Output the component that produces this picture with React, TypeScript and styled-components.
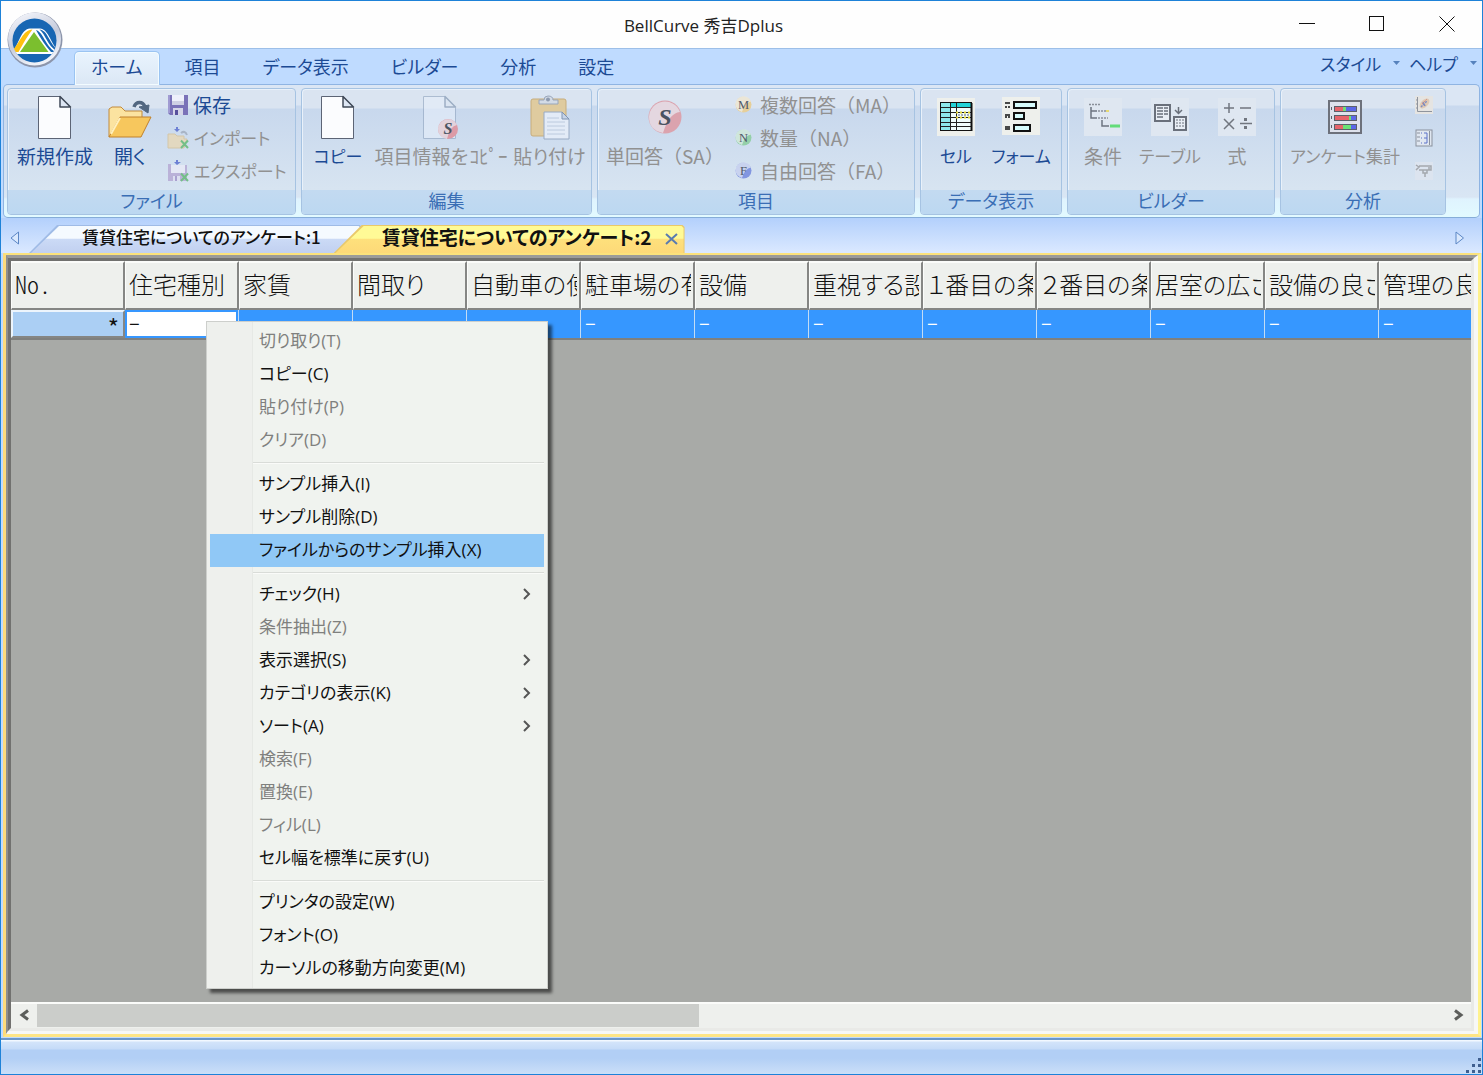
import React from "react";
import styled, { createGlobalStyle, css } from "styled-components";

const UI = `"Open Sans", "Noto Sans CJK JP", sans-serif`;
const JP = `"Noto Sans CJK JP", sans-serif`;

const Global = createGlobalStyle`
  *, *::before, *::after { box-sizing: border-box; }
  html, body, #root { height: 100%; }
  body { margin: 0; background: #bfdbff; overflow: hidden; }
  button, input { font: inherit; color: inherit; background: none; border: 0; padding: 0; margin: 0; }
`;

const Window = styled.div`
  position: relative;
  display: flex;
  flex-direction: column;
  height: 100%;
  min-height: 600px;
  border: 1px solid #1e82d8;
  background: #bfdbff;
  font-family: ${JP};
  font-feature-settings: "palt";
  color: #1c4a94;
  overflow: hidden;
`;

/* ---------- title bar ---------- */
const TitleBar = styled.header`
  display: flex;
  flex: none;
  height: 47px;
  background: #fefefe;
`;
const Title = styled.h1`
  flex: 1;
  margin: 0;
  padding-left: 134px;
  text-align: center;
  font: 400 17px/50px ${UI};
  color: #222;
`;
const CaptionButton = styled.button`
  display: grid;
  place-items: center;
  width: 70px;
  height: 46px;
`;
const Orb = styled.button`
  position: absolute;
  left: 5px;
  top: 10px;
  width: 58px;
  height: 58px;
`;

/* ---------- ribbon ---------- */
const TabStrip = styled.nav`
  display: flex;
  flex: none;
  align-items: flex-end;
  gap: 8px;
  height: 36px;
  padding: 0 4px 0 73px;
  border-top: 1px solid #9dbfe8;
`;
const RibbonTab = styled.button<{ $active?: boolean }>`
  height: 33px;
  padding: 0 16px 5px;
  font-size: 18px;
  line-height: 24px;
  border: 1px solid transparent;
  border-bottom: 0;
  border-radius: 5px 5px 0 0;
  ${(p) =>
    p.$active &&
    css`
      position: relative;
      height: 34px;
      margin-bottom: -1px;
      border-color: #9bc4f2;
      background: linear-gradient(#e9f4fe, #dbe7f5);
      box-shadow: inset 0 0 0 1px #f2fbff;
    `}
`;
const Spacer = styled.div`
  flex: 1;
`;
const MenuLink = styled.button`
  display: flex;
  align-items: center;
  gap: 12px;
  height: 34px;
  padding-right: 1px;
  margin-bottom: 4px;
  font-size: 17px;
`;
const Ribbon = styled.div`
  display: flex;
  flex: none;
  gap: 5px;
  margin: 0 2px;
  padding: 3px 3px 2px;
  border: 1px solid #8fb4e2;
  border-bottom-color: #86add8;
  border-radius: 5px;
  background: linear-gradient(#dbe6f4 0 20px, #c9d9ee 21px, #d9e6f4 112px, #dff3fe 114px, #e2faff);
`;
const Group = styled.section<{ $width: number }>`
  flex: 0 0 ${(p) => p.$width}px;
  border: 1px solid #a6c3e2;
  border-radius: 4px;
  box-shadow: inset 1px 1px 0 #e9f1fa;
  overflow: hidden;
  background: linear-gradient(#dae4f1 0 19px, #c8d8ed 20px, #d7e4f1 100px);
`;
const GroupBody = styled.div`
  display: flex;
  height: 101px;
  padding: 0 2px;
`;
const GroupLabel = styled.h2`
  margin: 0;
  height: 24px;
  font-size: 18px;
  line-height: 20px;
  font-weight: 400;
  text-align: center;
  color: #3a6eb5;
  background: linear-gradient(#c3daf1, #bcd8f1);
`;
const LargeButton = styled.button<{ $width: number; $kana?: boolean }>`
  display: flex;
  flex: 0 0 ${(p) => p.$width}px;
  flex-direction: column;
  align-items: center;
  padding-top: 6px;
  font-size: ${(p) => (p.$kana ? 17 : 19)}px;
  line-height: 24px;
  white-space: nowrap;
  &:disabled {
    color: #919191;
  }
  svg {
    margin-bottom: 4px;
  }
`;
const SmallStack = styled.div<{ $pad: number }>`
  display: flex;
  flex-direction: column;
  padding-left: ${(p) => p.$pad}px;
`;
const SmallButton = styled.button<{ $gap?: number; $kana?: boolean }>`
  display: flex;
  align-items: center;
  gap: ${(p) => p.$gap ?? 4}px;
  height: 33px;
  padding-bottom: 2px;
  font-size: ${(p) => (p.$kana ? 17 : 19)}px;
  line-height: 24px;
  white-space: nowrap;
  &:disabled {
    color: #919191;
  }
`;
const FullWidth = styled.span`
  font-feature-settings: normal;
`;

/* ---------- document tabs ---------- */
const DocStrip = styled.div`
  display: flex;
  flex: none;
  align-items: flex-end;
  height: 35px;
  background: linear-gradient(#b3d0fc, #dbe9ff);
`;
const ScrollArrow = styled.button`
  display: grid;
  place-items: center;
  width: 28px;
  height: 30px;
`;
const DocTab = styled.div<{ $active?: boolean }>`
  position: relative;
  z-index: 0;
  display: flex;
  align-items: center;
  gap: 13px;
  height: 28px;
  margin-left: ${(p) => (p.$active ? -28 : 0)}px;
  padding: ${(p) => (p.$active ? "0 6px 4px 48px" : "0 41px 4px 53px")};
  font-size: ${(p) => (p.$active ? 19 : 17)}px;
  line-height: 24px;
  font-weight: ${(p) => (p.$active ? 700 : 500)};
  color: #111;
  svg {
    margin-top: 6px;
  }
  &::before,
  &::after {
    content: "";
    position: absolute;
    z-index: -2;
    inset: 0;
    background: ${(p) => (p.$active ? "#e9c96b" : "#9fbbe6")};
    clip-path: polygon(28px 0, calc(100% - 2px) 0, 100% 2px, 100% 100%, 0 100%);
  }
  &::after {
    z-index: -1;
    inset: 1px 1px 0 2px;
    background: ${(p) =>
      p.$active
        ? "linear-gradient(#fffa96 0 45%, #fee07c 50%, #fdd978)"
        : "linear-gradient(#f5faff 0 45%, #cbdaf6 50%, #c1d0f0)"};
  }
`;

/* ---------- grid ---------- */
const Client = styled.main`
  display: flex;
  flex: 1;
  min-height: 0;
  margin: 0 1px 0 2px;
  border: solid;
  border-width: 2px 3px 3px;
  border-color: #fbe27b #fff28e #fee585 #fddb7b;
`;
const BevelOuter = styled.div`
  display: flex;
  flex: 1;
  min-width: 0;
  border: solid;
  border-width: 3px 4px 3px 2px;
  border-color: #9b9b99 #f7f8f6 #f7f8f6 #8f8f8d;
`;
const BevelInner = styled.div`
  display: flex;
  flex-direction: column;
  flex: 1;
  min-width: 0;
  border: solid;
  border-width: 3px 3px 3px;
  border-color: #71716f #e9eae7 #e9eae7 #71716f;
  background: #a8aaa7;
`;
const GridArea = styled.div`
  flex: 1;
  min-height: 0;
  overflow: hidden;
`;
const Table = styled.table`
  width: 1482px;
  table-layout: fixed;
  border-collapse: separate;
  border-spacing: 0;
  border-bottom: 2px solid #7f807e;
  color: #111;
`;
const Col = styled.col`
  width: 114px;
`;
const Head = styled.th`
  height: 49px;
  padding: 0 2px 4px 3px;
  background: #eef0ed;
  border: solid;
  border-width: 2px 2px 2px 1px;
  border-color: #fbfcfa #858684 #858684 #fbfcfa;
`;
const HeadText = styled.div`
  overflow: hidden;
  font-size: 24px;
  line-height: 40px;
  font-weight: 300;
  text-align: left;
  white-space: nowrap;
`;
const Narrow = styled.span`
  font-family: "Liberation Sans Narrow", "Noto Sans CJK JP", sans-serif;
  font-feature-settings: "hwid";
`;
const RowHead = styled.th`
  height: 28px;
  padding: 6px 4px 0 0;
  font-size: 24px;
  line-height: 18px;
  font-weight: 400;
  text-align: right;
  background: #abcff4;
  border: 2px solid #edf5fc;
  border-right-color: #858684;
  border-bottom-color: #858684;
`;
const Cell = styled.td`
  height: 28px;
  padding: 0 0 4px 4px;
  font-size: 20px;
  line-height: 24px;
  color: #fff;
  background: #3697ff;
  border-right: 1px solid #c3dcf4;
`;
const EditCell = styled(Cell)`
  padding: 2px;
`;
const CellInput = styled.input`
  display: block;
  width: 100%;
  height: 24px;
  padding: 0 0 4px 2px;
  font-size: 20px;
  color: #111;
  background: #fff;
  outline: 0;
`;
const ScrollBar = styled.div`
  display: flex;
  flex: none;
  height: 26px;
  border-top: 2px solid #fbfcfa;
  background: #eef0ed;
`;
const ScrollButton = styled.button`
  display: grid;
  place-items: center;
  flex: 0 0 26px;
  padding-bottom: 2px;
`;
const Track = styled.div`
  flex: 1;
`;
const Thumb = styled.div`
  width: 47%;
  height: 23px;
  background: #cbcdca;
`;
const StatusBar = styled.footer`
  display: flex;
  flex: none;
  justify-content: flex-end;
  align-items: flex-end;
  height: 36px;
  margin-top: 1px;
  border-top: 2px solid #6c97c8;
  background: linear-gradient(#f2f8ff 0 1px, #d3e4fa 2px, #c5dbf8 9px, #b2cff5 10px 18px, #cbdff8);
`;

/* ---------- context menu ---------- */
const Menu = styled.div`
  position: absolute;
  left: 205px;
  top: 320px;
  width: 342px;
  padding: 3px;
  border: 1px solid #cdcfcc;
  background: linear-gradient(90deg, #eef0ed 45px, #e6e9e5 45px 46px, #f0f3ef 46px);
  box-shadow: 4px 4px 3px rgba(0, 0, 0, 0.55);
`;
const MenuItem = styled.button<{ $hot?: boolean }>`
  display: flex;
  align-items: center;
  justify-content: space-between;
  width: 100%;
  height: 33px;
  padding: 0 12px 1px 49px;
  font: 400 17px/24px ${UI};
  font-feature-settings: "palt";
  text-align: left;
  white-space: nowrap;
  color: #111;
  background: ${(p) => (p.$hot ? "#90c8f6" : "transparent")};
  &:disabled {
    color: #7f807e;
  }
`;
const Divider = styled.hr`
  height: 11px;
  margin: 0 0 0 43px;
  border: 0;
  background: linear-gradient(transparent 5px, #d9dcd8 5px 6px, #fafbf9 6px 7px, transparent 7px);
`;

/* ---------- drawings ---------- */
const LogoIcon = () => (
  <svg width="58" height="58" viewBox="0 0 58 58" aria-hidden="true">
    <defs>
      <linearGradient id="ring" x1="0" y1="0" x2="0.4" y2="1">
        <stop offset="0" stopColor="#fafbff" />
        <stop offset="0.6" stopColor="#c5cbdc" />
        <stop offset="1" stopColor="#eef1f8" />
      </linearGradient>
      <clipPath id="disc"><circle cx="28.500" cy="29.500" r="22" /></clipPath>
    </defs>
    <circle cx="29" cy="29" r="27.500" fill="#8c95ab" />
    <circle cx="28.500" cy="28" r="26.500" fill="url(#ring)" />
    <circle cx="28.500" cy="29.500" r="22" fill="#1766b3" />
    <g clipPath="url(#disc)">
      <path d="M4 43C13 36 14 18 24 17.500L34 17.500C43 18 45 34 54 42V43Z" fill="#fff" />
      <path d="M5 41C14 33 16 19 26.500 18.500C22 24 17 33 12.500 41Z" fill="#fdc010" />
      <path d="M28 21L42.500 41H14Z" fill="#7bbf2e" />
      <path d="M30 19C37 21 39 34 49 41H45Q37 32 30 19Z" fill="#1766b3" />
      <path d="M33.500 18.500C42 19 43 33 53 40H50.500C41 34 40 24 33.500 18.500Z" fill="#1766b3" />
    </g>
  </svg>
);

const Page = ({ faded = false }: { faded?: boolean }) => (
  <g transform="translate(0 1)" opacity={faded ? 0.6 : 1}>
    <path d="M.5 .5H22L32.500 11.500V42.500H.5Z" fill={faded ? "#e6eefa" : "#fbfcfe"} stroke={faded ? "#8ea2bd" : "#5c6475"} />
    <path d="M22 .5V11H32.500Z" fill="#dde6f3" stroke={faded ? "#758ba8" : "#3f4857"} strokeWidth="1.500" strokeLinejoin="round" />
  </g>
);
const NewIcon = () => (
  <svg width="34" height="45" aria-hidden="true"><Page /></svg>
);
const OpenIcon = () => (
  <svg width="46" height="45" viewBox="0 0 46 45" aria-hidden="true">
    <path d="M2 42V14L5 12H14L18 16H35V22" fill="#fbe3a0" stroke="#c28a3b" />
    <path d="M2 42L13 22H44L34 42Z" fill="#f7c75d" stroke="#c0812c" strokeLinejoin="round" />
    <path d="M4 39L13 23" stroke="#fff0bd" strokeWidth="2" />
    <path d="M27 12C29 6 36 6 38 12" fill="none" stroke="#526781" strokeWidth="3.500" />
    <path d="M32 12L42 10L41 18Z" fill="#526781" stroke="#526781" strokeLinejoin="round" />
  </svg>
);
const SaveIcon = () => (
  <svg width="22" height="22" viewBox="0 0 22 22" aria-hidden="true">
    <path d="M1 1H21V21H3L1 19Z" fill="#7a72b8" />
    <path d="M5 1H17V11H5Z" fill="#eef0fb" />
    <path d="M5 7H17V11H5Z" fill="#cfd0e4" />
    <path d="M6 14H16V21H6Z" fill="#d5d5e8" />
    <path d="M8 16H11V21H8Z" fill="#57509c" />
    <path d="M1 1H3V19H1Z" fill="#a09bd2" />
  </svg>
);
const Cross = () => (
  <path d="M14 14.500L21 22M21 14.500L14 22" stroke="#74bf88" strokeWidth="2" />
);
const ImportIcon = () => (
  <svg width="23" height="24" viewBox="0 0 23 24" aria-hidden="true">
    <path d="M1 22V8H8L10 10H17V13H20L17 22Z" fill="#e2d8c0" stroke="#d3c6a8" />
    <path d="M7 3H13L10 6ZM9 1H11V3H9Z" fill="#6d80d4" />
    <path d="M14 7Q18 4 20 9" fill="none" stroke="#a9b5c6" strokeWidth="2" />
    <Cross />
  </svg>
);
const ExportIcon = () => (
  <svg width="23" height="24" viewBox="0 0 23 24" aria-hidden="true">
    <path d="M1 5H4V14H17V6H20V22H1Z" fill="#bab2d8" />
    <path d="M4 6H18V14H4Z" fill="#e4e8f5" />
    <path d="M6 17H13V22H6Z" fill="#dcdff0" />
    <path d="M8 17H10V22H8Z" fill="#a9a1cf" />
    <path d="M7 3H14L10 6ZM9 1H11V3H9Z" fill="#6d80d4" />
    <Cross />
  </svg>
);
const Ball = ({ color, letter }: { color: string; letter: string }) => (
  <svg width="17" height="17" viewBox="0 0 34 34" aria-hidden="true">
    <circle cx="17" cy="17" r="16" fill={color} />
    <path d="M1 17A16 16 0 0 1 32 11Q20 13 14 32Q2 28 1 17Z" fill="#eef2f8" opacity="0.65" />
    <text x="17" y="25" textAnchor="middle" fontFamily="Liberation Serif, serif" fontSize="25" fill="#515a69">{letter}</text>
  </svg>
);
const SingleIcon = () => (
  <svg width="36" height="45" viewBox="0 0 36 45" aria-hidden="true">
    <circle cx="18" cy="22" r="16.500" fill="#dba3ae" />
    <path d="M2 22A16 16 0 0 1 33 17Q22 18 16 38Q2 35 2 22Z" fill="#e8edf5" opacity="0.7" />
    <text x="18" y="30" textAnchor="middle" fontFamily="Liberation Serif, serif" fontWeight="700" fontStyle="italic" fontSize="24" fill="#495262">S</text>
  </svg>
);
const CopyItemIcon = () => (
  <svg width="36" height="45" viewBox="0 0 36 45" aria-hidden="true">
    <Page faded />
    <circle cx="25" cy="34" r="10" fill="#dc9aa6" />
    <path d="M15 34A10 10 0 0 1 34 30Q27 31 24 44Q16 43 15 34Z" fill="#e6e9f2" opacity="0.7" />
    <text x="25" y="39" textAnchor="middle" fontFamily="Liberation Serif, serif" fontWeight="700" fontStyle="italic" fontSize="16" fill="#4c5563">S</text>
  </svg>
);
const PasteIcon = () => (
  <svg width="42" height="45" viewBox="0 0 42 45" aria-hidden="true">
    <rect x="2" y="4" width="35" height="37" rx="2" fill="#dfcb9f" stroke="#c7ad7c" />
    <path d="M10 9V5H15Q15 1 19 1Q24 1 24 5H29V9Z" fill="#d3dbe6" stroke="#99a6ba" />
    <circle cx="19" cy="4.500" r="2" fill="#8e9bb0" />
    <path d="M15 17H33L40 24V44H15Z" fill="#e3ebf7" stroke="#98aac4" />
    <path d="M33 17V24H40Z" fill="#c6d4e8" stroke="#8094b2" />
    <path d="M18 23H30M18 27H36M18 31H36M18 35H36M18 39H36" stroke="#bccade" />
  </svg>
);
const CellIcon = () => (
  <svg width="38" height="45" viewBox="0 0 38 45" aria-hidden="true">
    <rect y="3" width="38" height="38" fill="#eef0ec" />
    <rect x="4" y="8" width="31" height="28" fill="#f1fefe" />
    <rect x="14" y="8" width="21" height="4" fill="#22d3d8" />
    <rect x="4" y="8" width="9" height="28" fill="#8de9ea" />
    <rect x="3.500" y="7.500" width="31" height="28" fill="none" stroke="#111" />
    <path d="M4 12.500H35M4 17.500H35M4 22.500H35M4 27.500H35M4 31.500H35M13.500 8V36M19.500 8V36" stroke="#222" />
    <path d="M34.500 8V36" stroke="#111" strokeWidth="2" />
    <path d="M19 17.500H35M19 22.500H35" stroke="#e3d437" strokeWidth="2" strokeDasharray="2 2" />
    <path d="M21 20H34" stroke="#5d6070" strokeDasharray="2 1" />
  </svg>
);
const FormIcon = () => (
  <svg width="38" height="45" viewBox="0 0 38 45" aria-hidden="true">
    <rect y="2" width="38" height="38" fill="#eef0ec" />
    <g fill="#d6fbfc" stroke="#111" strokeWidth="2">
      <rect x="12" y="7" width="22" height="6" />
      <rect x="12" y="18" width="10" height="6" />
      <rect x="12" y="30" width="16" height="6" />
    </g>
    <path d="M3 8H8M3 12H5M6 12H8M3 20H8M3 22H5M6 22H8M3 32H8M3 34H8" stroke="#111" strokeWidth="1.500" />
  </svg>
);
const CondIcon = () => (
  <svg width="38" height="45" viewBox="0 0 38 45" aria-hidden="true">
    <rect y="3" width="38" height="38" fill="#dfe7f1" />
    <path d="M5 9.500H16M14 16H24M14 23H24" stroke="#8a909a" strokeWidth="1.500" strokeDasharray="2 1" />
    <path d="M7 12V23H13M7 16H13M18 25V31H25" fill="none" stroke="#6d7480" strokeWidth="1.500" />
    <path d="M26 31H36" stroke="#63dc79" strokeWidth="3" />
    <path d="M22 16H25" stroke="#e6d974" strokeWidth="2" />
  </svg>
);
const TableIcon = () => (
  <svg width="38" height="45" viewBox="0 0 38 45" aria-hidden="true">
    <rect y="3" width="38" height="38" fill="#dfe7f1" />
    <rect x="4" y="10" width="15" height="16" fill="#e9eef5" stroke="#6a707b" strokeWidth="2" />
    <path d="M6 13H12M13 13H17M6 16H12M13 16H17M6 19H12M13 19H17M6 22H12" stroke="#6a707b" strokeWidth="1.500" />
    <rect x="23" y="22" width="12" height="13" fill="#e9eef5" stroke="#6a707b" strokeWidth="2" />
    <path d="M25 25H33M25 28H33M25 31H33" stroke="#6a707b" strokeDasharray="2 1" />
    <path d="M27.500 12V18M24 15L27.500 18.500L31 15" fill="none" stroke="#6a707b" strokeWidth="1.500" />
  </svg>
);
const FormulaIcon = () => (
  <svg width="38" height="45" viewBox="0 0 38 45" aria-hidden="true">
    <rect y="3" width="38" height="38" fill="#dfe7f1" />
    <path d="M6 13H16M11 8V18M22 13H33M6 24L16 34M16 24L6 34M22 28.500H34" stroke="#71767f" strokeWidth="1.500" />
    <path d="M26 23H29V26H26ZM26 31H29V34H26Z" fill="#71767f" />
  </svg>
);
const SurveyIcon = () => (
  <svg width="34" height="45" viewBox="0 0 34 45" aria-hidden="true">
    <rect x="1" y="6" width="32" height="32" fill="#dde1ec" stroke="#6d717b" strokeWidth="2" />
    {[[11, 8, 3, 10], [20, 14, 2, 5], [29, 8, 8, 5]].map(([y, r, g, b]) => (
      <g key={y}>
        <rect x="6" y={y} width="23" height="6" fill="#5c606b" />
        <rect x="7" y={y + 1} width={r} height="4" fill="#e6646c" />
        <rect x={7 + r} y={y + 1} width={g} height="4" fill="#6be276" />
        <rect x={7 + r + g} y={y + 1} width={b} height="4" fill="#5b68e8" />
        <rect x="3" y={y + 1} width="1" height="3" fill="#5c606b" />
      </g>
    ))}
  </svg>
);
const ScatterIcon = () => (
  <svg width="18" height="18" viewBox="0 0 18 18" aria-hidden="true">
    <rect width="18" height="18" fill="#e5e4e2" />
    <path d="M2.500 1V15.500H17M1 4H2M1 8H2M1 12H2" fill="none" stroke="#8f949d" />
    <ellipse cx="9.500" cy="7.500" rx="6" ry="3.500" transform="rotate(-45 9.500 7.500)" fill="#dfc9b4" />
    <path d="M6 11L12 5M8 6L10 10" stroke="#7d8cc0" strokeWidth="1.500" strokeDasharray="2 1" />
    <path d="M7 8L12 3" stroke="#d98d7c" strokeDasharray="2 1" />
  </svg>
);
const BoxIcon = () => (
  <svg width="18" height="18" viewBox="0 0 18 18" aria-hidden="true">
    <rect x="1" y="1" width="16" height="16" fill="#e0e7f1" stroke="#8a919d" />
    <path d="M2 4H5M2 8H5M2 12H5M14.500 2V16" stroke="#8a919d" />
    <path d="M6 4H7M6 9H7M6 14H7M9 4H12V14H9M9 9H12" stroke="#5d72c8" fill="none" />
  </svg>
);
const FilterIcon = () => (
  <svg width="18" height="18" viewBox="0 0 18 18" aria-hidden="true">
    <rect width="18" height="18" fill="#dce4ef" />
    <path d="M1 3L4 5L1 8M4 4H16V8H4M8 8V11H12V8M10 11V15M14 5V8" fill="none" stroke="#a4a8ae" strokeWidth="1.500" />
  </svg>
);
const Chevron = ({ left }: { left?: boolean }) => (
  <svg width="12" height="12" viewBox="0 0 12 12" aria-hidden="true">
    <path d={left ? "M10 1.500L4 6L10 10.500" : "M3 1.500L9 6L3 10.500"} fill="none" stroke="#5c5e5b" strokeWidth="3" />
  </svg>
);
const DropArrow = () => (
  <svg width="7" height="5" aria-hidden="true"><path d="M0 0H7L3.500 4Z" fill="#5682bd" /></svg>
);

const headers = ["住宅種別", "家賃", "間取り", "自動車の使", "駐車場の有", "設備", "重視する設", "１番目の条", "２番目の条", "居室の広さ", "設備の良さ", "管理の良"];

type Entry = { t: string; off?: boolean; sub?: boolean; hot?: boolean } | null;
const entries: Entry[] = [
  { t: "切り取り(T)", off: true },
  { t: "コピー(C)" },
  { t: "貼り付け(P)", off: true },
  { t: "クリア(D)", off: true },
  null,
  { t: "サンプル挿入(I)" },
  { t: "サンプル削除(D)" },
  { t: "ファイルからのサンプル挿入(X)", hot: true },
  null,
  { t: "チェック(H)", sub: true },
  { t: "条件抽出(Z)", off: true },
  { t: "表示選択(S)", sub: true },
  { t: "カテゴリの表示(K)", sub: true },
  { t: "ソート(A)", sub: true },
  { t: "検索(F)", off: true },
  { t: "置換(E)", off: true },
  { t: "フィル(L)", off: true },
  { t: "セル幅を標準に戻す(U)" },
  null,
  { t: "プリンタの設定(W)" },
  { t: "フォント(O)" },
  { t: "カーソルの移動方向変更(M)" },
];

export default function App() {
  return (
    <Window>
      <Global />
      <TitleBar>
        <Title>BellCurve 秀吉Dplus</Title>
        <CaptionButton aria-label="最小化">
          <svg width="16" height="16"><path d="M0 7.500H16" stroke="#111" /></svg>
        </CaptionButton>
        <CaptionButton aria-label="最大化">
          <svg width="16" height="16"><rect x=".5" y=".5" width="14" height="14" fill="none" stroke="#111" /></svg>
        </CaptionButton>
        <CaptionButton aria-label="閉じる">
          <svg width="16" height="16"><path d="M.5 .5L15.500 15.500M15.500 .5L.5 15.500" stroke="#111" /></svg>
        </CaptionButton>
      </TitleBar>

      <TabStrip>
        {["ホーム", "項目", "データ表示", "ビルダー", "分析", "設定"].map((t, i) => (
          <RibbonTab key={t} $active={i === 0}>{t}</RibbonTab>
        ))}
        <Spacer />
        <MenuLink aria-haspopup="menu">スタイル<DropArrow /></MenuLink>
        <MenuLink aria-haspopup="menu">ヘルプ<DropArrow /></MenuLink>
      </TabStrip>

      <Ribbon>
        <Group $width={289}>
          <GroupBody>
            <LargeButton $width={90}><NewIcon />新規作成</LargeButton>
            <LargeButton $width={60}><OpenIcon />開く</LargeButton>
            <SmallStack $pad={7}>
              <SmallButton><SaveIcon />保存</SmallButton>
              <SmallButton $kana disabled><ImportIcon />インポート</SmallButton>
              <SmallButton $kana disabled><ExportIcon />エクスポート</SmallButton>
            </SmallStack>
          </GroupBody>
          <GroupLabel>ファイル</GroupLabel>
        </Group>
        <Group $width={291}>
          <GroupBody>
            <LargeButton $width={68} $kana><NewIcon />コピー</LargeButton>
            <LargeButton $width={138} disabled><CopyItemIcon /><FullWidth>項目情報をｺﾋﾟｰ</FullWidth></LargeButton>
            <LargeButton $width={79} disabled><PasteIcon />貼り付け</LargeButton>
          </GroupBody>
          <GroupLabel>編集</GroupLabel>
        </Group>
        <Group $width={318}>
          <GroupBody>
            <LargeButton $width={130} disabled><SingleIcon /><FullWidth>単回答（SA）</FullWidth></LargeButton>
            <SmallStack $pad={5}>
              <SmallButton $gap={8} disabled><Ball color="#e6cf9a" letter="M" /><FullWidth>複数回答（MA）</FullWidth></SmallButton>
              <SmallButton $gap={8} disabled><Ball color="#94cfa9" letter="N" /><FullWidth>数量（NA）</FullWidth></SmallButton>
              <SmallButton $gap={8} disabled><Ball color="#8296e0" letter="F" /><FullWidth>自由回答（FA）</FullWidth></SmallButton>
            </SmallStack>
          </GroupBody>
          <GroupLabel>項目</GroupLabel>
        </Group>
        <Group $width={142}>
          <GroupBody>
            <LargeButton $width={66} $kana><CellIcon />セル</LargeButton>
            <LargeButton $width={64} $kana><FormIcon />フォーム</LargeButton>
          </GroupBody>
          <GroupLabel>データ表示</GroupLabel>
        </Group>
        <Group $width={208}>
          <GroupBody>
            <LargeButton $width={66} disabled><CondIcon />条件</LargeButton>
            <LargeButton $width={68} $kana disabled><TableIcon />テーブル</LargeButton>
            <LargeButton $width={66} disabled><FormulaIcon />式</LargeButton>
          </GroupBody>
          <GroupLabel>ビルダー</GroupLabel>
        </Group>
        <Group $width={166}>
          <GroupBody>
            <LargeButton $width={124} $kana disabled><SurveyIcon />アンケート集計</LargeButton>
            <SmallStack $pad={8}>
              <SmallButton disabled aria-label="散布図"><ScatterIcon /></SmallButton>
              <SmallButton disabled aria-label="箱ひげ図"><BoxIcon /></SmallButton>
              <SmallButton disabled aria-label="抽出"><FilterIcon /></SmallButton>
            </SmallStack>
          </GroupBody>
          <GroupLabel>分析</GroupLabel>
        </Group>
      </Ribbon>

      <DocStrip>
        <ScrollArrow aria-label="前のタブ">
          <svg width="10" height="14"><path d="M8.500 1V13L1 7Z" fill="#d9e8fd" stroke="#5b86c5" /></svg>
        </ScrollArrow>
        <DocTab>
          <button>賃貸住宅についてのアンケート:1</button>
        </DocTab>
        <DocTab $active>
          <button>賃貸住宅についてのアンケート:2</button>
          <button aria-label="タブを閉じる">
            <svg width="14" height="12"><path d="M1 1L12 11M12 1L1 11" stroke="#5a7bb0" strokeWidth="2" /></svg>
          </button>
        </DocTab>
        <Spacer />
        <ScrollArrow aria-label="次のタブ">
          <svg width="10" height="14"><path d="M1 1V13L8.500 7Z" fill="#d9e8fd" stroke="#5b86c5" /></svg>
        </ScrollArrow>
        <svg width="8" height="1" aria-hidden="true" />
      </DocStrip>

      <Client>
        <BevelOuter>
          <BevelInner>
            <GridArea>
              <Table>
                <colgroup>
                  {[...Array(13)].map((_, i) => <Col key={i} />)}
                </colgroup>
                <thead>
                  <tr>
                    <Head scope="col"><HeadText><Narrow>No.</Narrow></HeadText></Head>
                    {headers.map((h) => <Head key={h} scope="col"><HeadText>{h}</HeadText></Head>)}
                  </tr>
                </thead>
                <tbody>
                  <tr>
                    <RowHead scope="row">*</RowHead>
                    <EditCell><CellInput defaultValue="–" aria-label="住宅種別" /></EditCell>
                    {headers.slice(1).map((h) => <Cell key={h}>–</Cell>)}
                  </tr>
                </tbody>
              </Table>
            </GridArea>
            <ScrollBar>
              <ScrollButton aria-label="左へ"><Chevron left /></ScrollButton>
              <Track><Thumb /></Track>
              <ScrollButton aria-label="右へ"><Chevron /></ScrollButton>
            </ScrollBar>
          </BevelInner>
        </BevelOuter>
      </Client>

      <StatusBar>
        <svg width="17" height="17" aria-hidden="true">
          {[[13, 1], [7, 7], [13, 7], [1, 13], [7, 13], [13, 13]].map(([x, y]) => (
            <rect key={`${x}-${y}`} x={x} y={y} width="3" height="3" fill="#3f5f90" />
          ))}
        </svg>
      </StatusBar>

      <Orb aria-label="アプリケーションメニュー"><LogoIcon /></Orb>

      <Menu role="menu">
        {entries.map((e, i) =>
          e ? (
            <MenuItem key={i} role="menuitem" disabled={e.off} $hot={e.hot}>
              {e.t}
              {e.sub && (
                <svg width="10" height="12" aria-hidden="true">
                  <path d="M2 1L7 6L2 11" fill="none" stroke="#555" strokeWidth="2" />
                </svg>
              )}
            </MenuItem>
          ) : (
            <Divider key={i} />
          )
        )}
      </Menu>
    </Window>
  );
}
